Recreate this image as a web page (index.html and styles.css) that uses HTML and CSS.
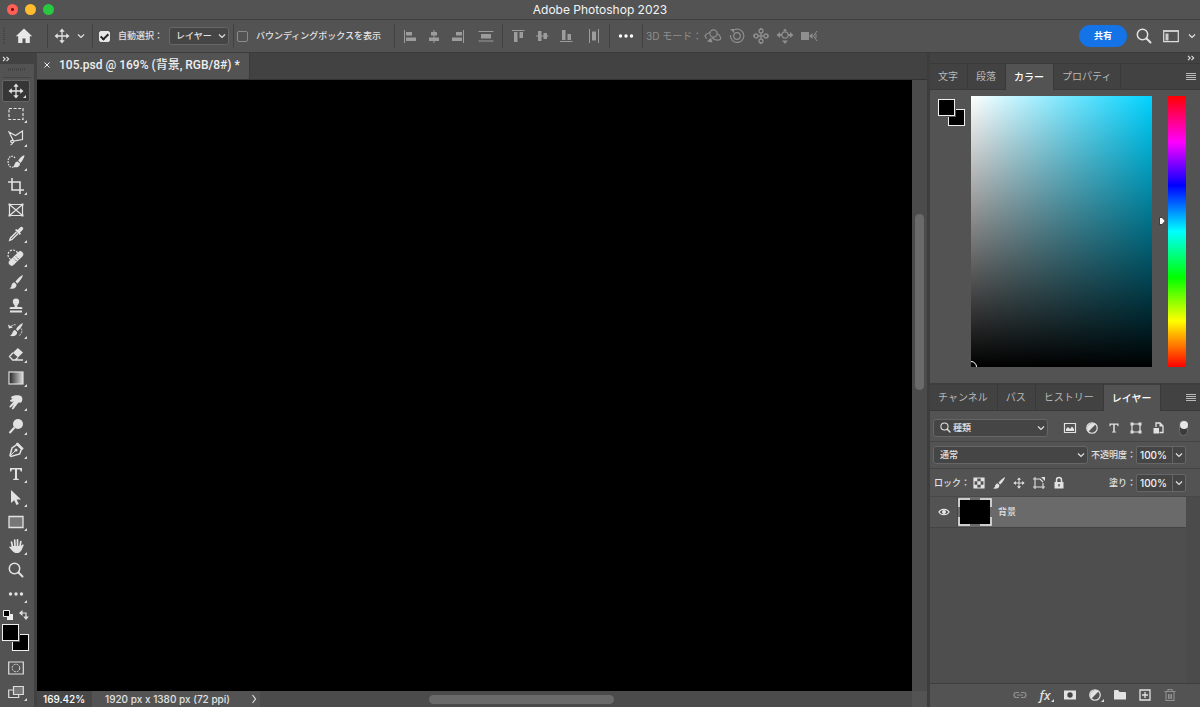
FILE: index.html
```html
<!DOCTYPE html>
<html lang="ja">
<head>
<meta charset="utf-8">
<title>Adobe Photoshop 2023</title>
<link rel="stylesheet" href="styles.css">
</head>
<body>
<svg class="defs" aria-hidden="true">
  <symbol id="move" viewBox="0 0 16 16"><path d="M8 2v12M2 8h12" stroke="currentColor" stroke-width="1.3"/><path d="M8 .5 10.7 3.8H5.300zM8 15.500 10.700 12.200H5.300zM.5 8 3.800 5.300v5.400zM15.500 8 12.200 5.300v5.400z" fill="currentColor"/></symbol>
  <symbol id="chev" viewBox="0 0 8 8"><path d="M1 2.500 4 5.500 7 2.500" fill="none" stroke="currentColor" stroke-width="1.200"/></symbol>
  <symbol id="more" viewBox="0 0 16 16"><circle cx="2.500" cy="8" r="1.700" fill="currentColor"/><circle cx="8" cy="8" r="1.700" fill="currentColor"/><circle cx="13.500" cy="8" r="1.700" fill="currentColor"/></symbol>
  <symbol id="lens" viewBox="0 0 16 16"><circle cx="6.500" cy="6.500" r="5.200" fill="none" stroke="currentColor" stroke-width="1.500"/><path d="m10.500 10.500 4 4" stroke="currentColor" stroke-width="2" stroke-linecap="round"/></symbol>
  <symbol id="brush" viewBox="0 0 16 16"><path d="M15 1c-2.500 1-6 4.200-7.600 6.700l1.900 1.900C11.700 7.600 14.400 3.700 15 1zM6.600 8.500c-2.600 0-3 2.400-3.300 3.900-.4 1-1.300 1.500-2.300 1.700 3 1.200 7.500.7 7.500-3.700z" fill="currentColor"/></symbol>
  <symbol id="type" viewBox="0 0 16 16"><path d="M2 2h12v3.500h-1.200L12 3.500H9v9l1.800.5v1H5.200v-1l1.800-.5v-9H4l-.8 2H2z" fill="currentColor"/></symbol>
  <symbol id="half" viewBox="0 0 16 16"><circle cx="8" cy="8" r="6" fill="none" stroke="currentColor" stroke-width="1.400"/><path d="M3.800 12.200A6 6 0 0 1 12.200 3.800z" fill="currentColor"/></symbol>
  <symbol id="menu" viewBox="0 0 10 8"><path d="M0 .5h10M0 2.500h10M0 4.500h10M0 6.500h10" stroke="currentColor"/></symbol>
  <symbol id="dbl" viewBox="0 0 8 6"><path d="m1 .8 2.200 2.200L1 5.200M4.500.8 6.700 3 4.500 5.200" fill="none" stroke="currentColor" stroke-width="1.100"/></symbol>
</svg>
<div class="app">
  <header class="titlebar">
    <div class="lights"><button class="light red" aria-label="閉じる"></button><button class="light yellow" aria-label="しまう"></button><button class="light green" aria-label="拡大"></button></div>
    <h1>Adobe Photoshop 2023</h1>
  </header>

  <div class="options">
    <div class="seg seg-home"><span class="grip"></span><button aria-label="ホーム"><svg class="i18" viewBox="0 0 18 18"><path d="M9 1.500.8 9.200h2.400V16h4.300v-4.600h3V16h4.300V9.200h2.400z" fill="#e8e8e8"/></svg></button></div>
    <div class="seg seg-move"><button aria-label="移動ツール"><svg class="i16"><use href="#move"/></svg></button><button aria-label="プリセット"><svg class="i8"><use href="#chev"/></svg></button></div>
    <div class="seg seg-auto"><input type="checkbox" id="auto" checked><label for="auto">自動選択：</label><span class="select"><select aria-label="自動選択"><option>レイヤー</option></select><svg class="i8"><use href="#chev"/></svg></span></div>
    <div class="seg seg-box"><input type="checkbox" id="bbox"><label for="bbox">バウンディングボックスを表示</label></div>
    <div class="seg seg-align">
      <button aria-label="左端揃え"><svg class="i16" viewBox="0 0 16 16"><path d="M2 2h1v13H2zM4 4h6v3.500H4zM4 9.500h10V13H4z"/></svg></button>
      <button aria-label="水平方向中央揃え"><svg class="i16" viewBox="0 0 16 16"><path d="M7.500 2h1v13h-1zM5 4h6v3.500H5zM3 9.500h10V13H3z"/></svg></button>
      <button aria-label="右端揃え"><svg class="i16" viewBox="0 0 16 16"><path d="M13 2h1v13h-1zM6 4h6v3.500H6zM2 9.500h10V13H2z"/></svg></button>
      <button class="wide" aria-label="垂直分布"><svg class="i16" viewBox="0 0 16 16"><path d="M.5 3h15v1H.5zM3 6h10v4.500H3zM.5 12.500h15v1H.5z"/></svg></button>
    </div>
    <div class="seg seg-align2">
      <button aria-label="上端揃え"><svg class="i16" viewBox="0 0 16 16"><path d="M2 2h12.500v1H2zM4 4h3.500v10H4zM9.500 4H13v6H9.500z"/></svg></button>
      <button aria-label="垂直方向中央揃え"><svg class="i16" viewBox="0 0 16 16"><path d="M2 7.500h12.500v1H2zM4 3h3.500v10H4zM9.500 5H13v6H9.500z"/></svg></button>
      <button aria-label="下端揃え"><svg class="i16" viewBox="0 0 16 16"><path d="M2 13h12.500v1H2zM4 2h3.500v10H4zM9.500 6H13v6H9.500z"/></svg></button>
      <button class="wide" aria-label="水平分布"><svg class="i16" viewBox="0 0 16 16"><path d="M3 1h1v14H3zM6 3.500h4v9H6zM12 1h1v14h-1z"/></svg></button>
    </div>
    <div class="seg seg-more"><button aria-label="整列と分布"><svg class="i16"><use href="#more"/></svg></button></div>
    <div class="seg seg-3d"><span>3D モード：</span>
      <button aria-label="3D 回転"><svg class="i18" viewBox="0 0 18 18"><g fill="none" stroke="currentColor" stroke-width="1.200"><circle cx="9.500" cy="6.500" r="3.600"/><path d="M6 5.500C1.500 6.500-.5 9.500 3 11.500M13 6.500c4 2.500 5 5.500 2 6.500-2 .6-5-.5-7-2"/></g><path d="m3 14.500 5.500 1-1.500-5z" fill="currentColor"/></svg></button>
      <button aria-label="3D ロール"><svg class="i18" viewBox="0 0 18 18"><g fill="none" stroke="currentColor" stroke-width="1.200"><circle cx="9" cy="9" r="3.300"/><path d="M5 3.500A6.700 6.700 0 1 1 2.500 8"/></g><path d="M2 2h4v4z" fill="currentColor"/></svg></button>
      <button aria-label="3D パン"><svg class="i18" viewBox="0 0 18 18"><g fill="none" stroke="currentColor" stroke-width="1.300"><circle cx="9" cy="4" r="2"/><circle cx="9" cy="14" r="2"/><circle cx="4" cy="9" r="2"/><circle cx="14" cy="9" r="2"/><path d="M9 6v6M6 9h6"/></g><path d="M9 .8 11 3H7zM9 17.200 11 15H7zM.8 9 3 7v4zM17.200 9 15 7v4z" fill="currentColor"/></svg></button>
      <button aria-label="3D スライド"><svg class="i18" viewBox="0 0 18 18"><circle cx="9" cy="8" r="3.200" fill="none" stroke="currentColor" stroke-width="1.200"/><path d="M9 17l3-3.500H6zM.5 8 4 5v2h2v2H4v2zM17.500 8 14 5v2h-2v2h2v2zM9 1.500l2 2.500H7z" fill="currentColor"/></svg></button>
      <button aria-label="3D カメラ"><svg class="i18" viewBox="0 0 18 18"><path d="M1 5h8v8H1zM9 9l3.500-3v6z" fill="currentColor"/><path d="m17 4-3.500 5 3.500 5M16 7v4" fill="none" stroke="currentColor"/></svg></button>
    </div>
    <div class="right-tools">
      <button class="share">共有</button>
      <button aria-label="検索"><svg class="i16"><use href="#lens"/></svg></button>
      <button aria-label="ワークスペース"><svg class="i16" viewBox="0 0 16 16"><path d="M.7 2.700h14.600v11H.7z" fill="none" stroke="#ddd" stroke-width="1.200"/><path d="M1 2h14v2H1zM2.500 5.500h3v7h-3z" fill="#ccc"/></svg></button>
      <button aria-label="ワークスペースの選択"><svg class="i8"><use href="#chev"/></svg></button>
    </div>
  </div>

  <div class="work">
    <nav class="tools" aria-label="ツール">
      <button class="collapse" aria-label="展開"><svg class="dbl"><use href="#dbl"/></svg></button>
      <div class="handle"></div>
      <div class="toollist">
        <button class="tool fly active" aria-label="移動"><svg class="i16"><use href="#move"/></svg></button>
        <button class="tool fly" aria-label="長方形選択"><svg class="i16" viewBox="0 0 16 16"><rect x="1" y="2.500" width="14" height="11" fill="none" stroke="currentColor" stroke-width="1.200" stroke-dasharray="3 1.600"/></svg></button>
        <button class="tool fly" aria-label="多角形選択"><svg class="i16" viewBox="0 0 16 16"><path d="M1 2l6.500 3.500L14.500 1v8.500L5.500 11zM5.500 11c-2-1.500-4 .5-2 1.500 1.500.7 3-.5 2-1.500zM5 12c-.2 1.500-1 2.500-2.500 3" fill="none" stroke="currentColor" stroke-width="1.200"/></svg></button>
        <button class="tool fly" aria-label="クイック選択"><svg class="i18" viewBox="0 0 18 18"><path d="M8 5C7 3 4 2.500 2.300 4.500S.8 11 2.500 13s4.500 1.500 5.500-.5" fill="none" stroke="currentColor" stroke-width="1.200" stroke-dasharray="1.600 1"/><path d="M17.500 2c-3 1-5.500 4-6.300 5.700l2.200 2.200C15.500 8 17.200 5 17.500 2zM10.500 8.500c-3 .3-2.300 3.500-4.500 5.500 3.500 1 7 0 7-3.500z" fill="currentColor"/></svg></button>
        <button class="tool fly" aria-label="切り抜き"><svg class="i16" viewBox="0 0 16 16"><path d="M4 0v12h12M0 4h12v12" fill="none" stroke="currentColor" stroke-width="1.600"/></svg></button>
        <button class="tool" aria-label="フレーム"><svg class="i16" viewBox="0 0 16 16"><path d="M1.500 2.500h13v11h-13zM1.500 2.500l13 11M14.500 2.500l-13 11" fill="none" stroke="currentColor" stroke-width="1.200"/><path d="M.5 1.500h2v2h-2zM13.500 1.500h2v2h-2zM.5 12.500h2v2h-2zM13.500 12.500h2v2h-2z" fill="currentColor"/></svg></button>
        <button class="tool fly" aria-label="スポイト"><svg class="i16" viewBox="0 0 16 16"><path d="M8.500 6 2.500 12l-.8 2.300L4 13.500l6-6" fill="none" stroke="currentColor" stroke-width="1.400"/><path d="m7 4 1.300-1 1.200 1L12 1.500c1-1 2-.8 2.700-.2.700.8.800 1.800-.2 2.700L12 6.500l1 1.200L11.800 9z" fill="currentColor"/></svg></button>
        <button class="tool fly" aria-label="スポット修復"><svg class="i18" viewBox="0 0 18 18"><circle cx="6" cy="6" r="5" fill="none" stroke="currentColor" stroke-width="1.200" stroke-dasharray="2 1.300"/><rect x="0" y="6.500" width="18" height="6" rx="3" transform="rotate(-45 9 9.500)" fill="currentColor"/><path d="m7 9.500 3.500 3.500M9 7.500l3.500 3.500" stroke="#535353" stroke-width="1" stroke-dasharray="1.200 1"/></svg></button>
        <button class="tool fly" aria-label="ブラシ"><svg class="i16"><use href="#brush"/></svg></button>
        <button class="tool fly" aria-label="スタンプ"><svg class="i16" viewBox="0 0 16 16"><path d="M6.700 7.500C5.500 6 4.800 5 4.800 3.800a3.200 3.200 0 0 1 6.400 0C11.200 5 10.500 6 9.300 7.500L9.500 9H13c1 0 1.500.8 1.500 2h-13c0-1.200.5-2 1.500-2h3.500zM2 12.500h12v2H2z" fill="currentColor"/></svg></button>
        <button class="tool fly" aria-label="ヒストリーブラシ"><svg class="i16" viewBox="0 0 16 16"><path d="M15 1c-2.500 1-6 4.200-7 6.200l1.700 1.700C12 7 14.500 3.500 15 1zM7 8c-2.500.3-2 4-5 5.800 4 1.200 7.500-.5 7-3.800zM0 2.500 5 5.500 1 6.500z" fill="currentColor"/><path d="M3 4.500C5 2.500 7 2.500 8.500 3M13 6.500c2 2.500.5 6-2.500 7.500" fill="none" stroke="currentColor" stroke-dasharray="2 1"/></svg></button>
        <button class="tool fly" aria-label="消しゴム"><svg class="i16" viewBox="0 0 16 16"><path d="M9.800 2 15 6.500 10 11.500 5 6.700z" fill="currentColor"/><path d="M5 6.700 1.500 10.500 4.700 14H7l3-2.500M5 14h10" fill="none" stroke="currentColor" stroke-width="1.300"/></svg></button>
        <button class="tool fly" aria-label="グラデーション"><svg class="i16" viewBox="0 0 16 16"><defs><linearGradient id="gr"><stop stop-color="#222"/><stop offset="1" stop-color="#ddd"/></linearGradient></defs><rect x="1" y="2" width="14" height="12" fill="url(#gr)" stroke="#ddd" stroke-width="1.200"/></svg></button>
        <button class="tool fly" aria-label="指先"><svg class="i16" viewBox="0 0 16 16"><path d="M3 3c2-2 8-2.500 10-1 2 1.500 1.500 5 .5 6-.8 1-2 .6-3 .5L5.500 15c-1 .8-2 0-1.500-1l2-3.800-3 3c-1.200.8-2-.3-1.300-1.300L6 7c-2.500 2-5 0-3.500-1L5 4.500C4 5 3 4 3 3z" fill="currentColor"/></svg></button>
        <button class="tool fly" aria-label="覆い焼き"><svg class="i16" viewBox="0 0 16 16"><circle cx="10" cy="6" r="5" fill="currentColor"/><path d="M6.500 9.500 1.500 15" stroke="currentColor" stroke-width="2"/></svg></button>
        <button class="tool fly" aria-label="ペン"><svg class="i16" viewBox="0 0 16 16"><path d="m9 2.500 4.500 4.500-1.800 5L3 14.500l-1-1L4 6z" fill="none" stroke="currentColor" stroke-width="1.500"/><path d="m9.500.8 5.700 5.700-1.300 1.200L8.300 2zM2 14l5-5" stroke="currentColor" fill="currentColor"/><circle cx="8" cy="8" r="1.500" fill="currentColor"/></svg></button>
        <button class="tool fly" aria-label="文字"><svg class="i16"><use href="#type"/></svg></button>
        <button class="tool fly" aria-label="パス選択"><svg class="i16" viewBox="0 0 16 16"><path d="M3 0v13l3.200-2.700L8.500 15l2.300-1-2.200-4.500H13z" fill="currentColor"/></svg></button>
        <button class="tool fly" aria-label="長方形"><svg class="i16" viewBox="0 0 16 16"><path d="M1 2.500h14v11H1z" fill="#777" stroke="currentColor" stroke-width="1.300"/></svg></button>
        <button class="tool fly" aria-label="手のひら"><svg class="i16" viewBox="0 0 16 16"><path d="M4.700 9.500 3.500 4M7 8 6.700 2M9.500 8V1.800M12 8.500 12.800 3.500" stroke="currentColor" stroke-width="1.700" stroke-linecap="round"/><path d="M4 8h8.800l1.700-1.500c1-.3 1.500.3 1 1.200C13.500 12 13 15 9 15c-3.500 0-4.500-2-6.500-4.300C0 8.500 1.500 8 3 9z" fill="currentColor"/></svg></button>
        <button class="tool" aria-label="ズーム"><svg class="i16"><use href="#lens"/></svg></button>
        <button class="tool fly" aria-label="その他"><svg class="i16"><use href="#more"/></svg></button>
      </div>
      <div class="mini">
        <button aria-label="初期設定の色"><svg class="i10" viewBox="0 0 10 10"><path d="M4 4h6v6H4z" fill="#eee"/><path d="M.5.5h6v6h-6z" fill="#000" stroke="#eee"/></svg></button>
        <button aria-label="色の切り替え"><svg class="i10" viewBox="0 0 10 10"><path d="M2 3h5v5" fill="none" stroke="currentColor" stroke-width="1.200"/><path d="M3.500 0v6L0 3zM4.200 6.500h5.600L7 10z" fill="currentColor"/></svg></button>
      </div>
      <button class="swatches" aria-label="描画色と背景色"><span class="sw back"></span><span class="sw front"></span></button>
      <button class="tool mask" aria-label="クイックマスク"><svg class="i16" viewBox="0 0 16 16"><path d="M.7 2h14.600v12H.7z" fill="none" stroke="#ddd" stroke-width="1.200"/><circle cx="8" cy="8" r="3.800" fill="none" stroke="#ddd" stroke-dasharray="2 1"/></svg></button>
      <button class="tool fly" aria-label="スクリーンモード"><svg class="i16" viewBox="0 0 16 16"><path d="M5 6H.7v7.500h10V11" fill="none" stroke="#ddd" stroke-width="1.200"/><path d="M5.500 2.500h9.800v8H5.500z" fill="#777" stroke="#ddd" stroke-width="1.200"/></svg></button>
    </nav>

    <main class="document">
      <div class="doctabs"><div class="doctab"><button aria-label="閉じる"><svg class="i8" viewBox="0 0 8 8"><path d="m1.500 1.500 5 5m0-5-5 5" stroke="currentColor"/></svg></button><span>105.psd @ 169% (背景, RGB/8#) *</span></div></div>
      <div class="canvasrow"><div class="canvas"></div><div class="vscroll"><div class="vthumb"></div></div></div>
      <footer class="status"><input class="zoom" aria-label="ズーム率" value="169.42%"><div class="info"><span>1920 px x 1380 px (72 ppi)</span><button aria-label="情報"><svg class="i10" viewBox="0 0 10 10"><path d="m3.500 1 3 4-3 4" fill="none" stroke="currentColor" stroke-width="1.200"/></svg></button></div><div class="hscroll"><div class="hthumb"></div></div><div class="corner"></div></footer>
    </main>

    <aside class="panels">
      <div class="panelhead"><button aria-label="折りたたむ"><svg class="dbl"><use href="#dbl"/></svg></button></div>
      <section class="color">
        <div class="tabs"><button>文字</button><button>段落</button><button class="on">カラー</button><button>プロパティ</button><button class="burger" aria-label="パネルメニュー"><svg class="menuic"><use href="#menu"/></svg></button></div>
        <div class="picker"><button class="swatches" aria-label="描画色と背景色"><span class="sw back"></span><span class="sw front"></span></button>
          <div class="field"><span class="ring"></span></div>
          <div class="hue"><svg class="pointer" viewBox="0 0 8 10"><path d="M1.500 1.500H4L7.300 5 4 8.500H1.500z" fill="#fff" stroke="#222" stroke-width=".8"/></svg></div></div>
      </section>
      <section class="layers">
        <div class="tabs"><button>チャンネル</button><button>パス</button><button>ヒストリー</button><button class="on">レイヤー</button><button class="burger" aria-label="パネルメニュー"><svg class="menuic"><use href="#menu"/></svg></button></div>
        <div class="row filter">
          <span class="select kind"><svg class="lens"><use href="#lens"/></svg><select aria-label="種類"><option>種類</option></select><svg class="i8"><use href="#chev"/></svg></span>
          <div class="kinds">
            <button aria-label="ピクセル"><svg class="i14" viewBox="0 0 14 14"><path d="M1.500 2.500h11v9h-11z" fill="none" stroke="currentColor" stroke-width="1.200"/><path d="M3 10V8l2-2 2 2 2-2.500L11 8v2z" fill="currentColor"/></svg></button>
            <button aria-label="調整"><svg class="i14"><use href="#half"/></svg></button>
            <button aria-label="テキスト"><svg class="i12"><use href="#type"/></svg></button>
            <button aria-label="シェイプ"><svg class="i14" viewBox="0 0 14 14"><path d="M3 3h8v8H3z" fill="none" stroke="currentColor" stroke-width="1.200"/><path d="M1.500 1.500h3v3h-3zM9.500 1.500h3v3h-3zM1.500 9.500h3v3h-3zM9.500 9.500h3v3h-3z" fill="#ddd"/></svg></button>
            <button aria-label="スマートオブジェクト"><svg class="i14" viewBox="0 0 14 14"><path d="M5 6V2h4l3 3v6.500H8.500" fill="none" stroke="currentColor" stroke-width="1.300"/><path d="M2.500 7H8v5.500H2.500zM8.500 1.500v4H12z" fill="currentColor"/></svg></button>
          </div>
          <button class="toggle" aria-label="フィルター切り替え"></button>
        </div>
        <div class="row blend"><span class="select mode"><select aria-label="描画モード"><option>通常</option></select><svg class="i8"><use href="#chev"/></svg></span><label for="op">不透明度：</label><span class="num"><input id="op" value="100%"><button aria-label="不透明度の調整"><svg class="i8"><use href="#chev"/></svg></button></span></div>
        <div class="row lock"><span class="locklabel">ロック：</span>
          <div class="locks">
            <button aria-label="透明ピクセル"><svg class="i12" viewBox="0 0 12 12"><path d="M1 1h10v10H1z" fill="none" stroke="currentColor" stroke-width="1.200"/><path d="M1 1h3.300v3.300H1zM7.700 1H11v3.300H7.700zM4.300 4.300h3.400v3.400H4.300zM1 7.700h3.300V11H1zM7.700 7.700H11V11H7.700z" fill="currentColor"/></svg></button>
            <button aria-label="画像ピクセル"><svg class="i14"><use href="#brush"/></svg></button>
            <button aria-label="位置"><svg class="i12"><use href="#move"/></svg></button>
            <button aria-label="アートボード"><svg class="i14" viewBox="0 0 14 14"><path d="M3 1v12M11 7v6M1 3h7M1 11h12M8 3l3 3" fill="none" stroke="currentColor" stroke-width="1.100"/><path d="M9 1h4v4z" fill="currentColor"/></svg></button>
            <button aria-label="すべて"><svg class="i14" viewBox="0 0 14 14"><path d="M4.500 6V4a2.500 2.500 0 0 1 5 0v2" fill="none" stroke="currentColor" stroke-width="1.500"/><path d="M2.500 6h9v6.500h-9z" fill="currentColor"/><path d="M6.300 8h1.400v2.500H6.300z" fill="#535353"/></svg></button>
          </div>
          <label for="fill">塗り：</label><span class="num"><input id="fill" value="100%"><button aria-label="塗りの調整"><svg class="i8"><use href="#chev"/></svg></button></span></div>
        <div class="layerarea"><div class="list">
          <div class="layer"><button class="eye" aria-label="表示"><svg class="i12" viewBox="0 0 14 14"><path d="M1 7c2.800-4.300 9.200-4.300 12 0-2.800 4.300-9.200 4.300-12 0z" fill="none" stroke="#eee" stroke-width="1.300"/><circle cx="7" cy="7" r="2.200" fill="#eee"/></svg></button><div class="layerbody"><svg class="thumb" viewBox="0 0 34 28"><path d="M2 2h30v24H2z" fill="#000"/><path d="M1 9V1h11M22 1h11v8M33 19v8H22M12 27H1v-8" fill="none" stroke="#eee" stroke-width="1.500"/></svg><span>背景</span></div></div>
        </div><div class="track"></div></div>
        <footer class="actions">
          <button class="dim" aria-label="リンク"><svg class="i14" viewBox="0 0 14 14"><path d="M6 4.500H3.500a2.500 2.500 0 0 0 0 5H6M8 4.500h2.500a2.500 2.500 0 0 1 0 5H8M4 7h6" fill="none" stroke="currentColor" stroke-width="1.200"/></svg></button>
          <button class="fx fly" aria-label="レイヤースタイル">fx</button>
          <button aria-label="マスク"><svg class="i14" viewBox="0 0 14 14"><path d="M1 2.500h12v9H1z" fill="currentColor"/><circle cx="7" cy="7" r="2.700" fill="#444"/></svg></button>
          <button class="fly" aria-label="塗りつぶし"><svg class="i14"><use href="#half"/></svg></button>
          <button aria-label="グループ"><svg class="i14" viewBox="0 0 14 14"><path d="M1 3q0-1 1-1h3l1.500 2H12q1 0 1 1v6.500H1z" fill="currentColor"/></svg></button>
          <button aria-label="新規レイヤー"><svg class="i14" viewBox="0 0 14 14"><path d="M2 2h10v10H2zM7 4v6M4 7h6" fill="none" stroke="currentColor" stroke-width="1.300"/></svg></button>
          <button class="dim" aria-label="削除"><svg class="i14" viewBox="0 0 14 14"><path d="M1.500 3.500h11M5 3V1.500h4V3M3 4v8.500h8V4M5.500 6v5M8.500 6v5M7 6v5" fill="none" stroke="currentColor" stroke-width="1.100"/></svg></button>
        </footer>
      </section>
    </aside>
  </div>
</div>
</body>
</html>
```
FILE: styles.css
```css
* { box-sizing: border-box; }
body { margin: 0; background: #424242; color: #e2e2e2; font: 500 9px/16px Inter, "Noto Sans CJK JP", sans-serif; }
button { display: flex; align-items: center; justify-content: center; padding: 0; border: 0; background: none; color: inherit; font: inherit; }
svg { display: block; flex: none; }
.defs { position: absolute; width: 0; height: 0; }
.i8 { width: 8px; height: 8px; }
.i10 { width: 10px; height: 10px; }
.i12 { width: 12px; height: 12px; }
.i14 { width: 14px; height: 14px; }
.i16 { width: 16px; height: 16px; }
.i18 { width: 18px; height: 18px; }
.app { display: flex; flex-direction: column; height: 100vh; overflow: hidden; }

.titlebar { display: grid; grid-template-columns: 1fr auto 1fr; align-items: center; height: 20px; background: #535353; border-bottom: 1px solid #3e3e3e; }
.titlebar h1 { margin: 0; font-size: 12px; font-weight: 400; line-height: 18px; color: #f4f4f4; }
.lights { display: flex; gap: 7px; padding-left: 7px; }
.light { width: 11px; height: 11px; border-radius: 50%; }
.red { background: radial-gradient(circle, #7a0c08 0 1px, #ff5f57 2px); }
.yellow { background: #febc2e; }
.green { background: #28c840; }

.options { display: flex; height: 33px; background: #535353; border-bottom: 1px solid #3b3b3b; }
.seg { display: flex; align-items: center; position: relative; flex: none; }
.seg:not(.seg-3d)::after { content: ""; position: absolute; right: 0; top: 4px; bottom: 4px; width: 1px; background: #414141; }
.grip { width: 2px; height: 18px; background: repeating-linear-gradient(#444 0 1px, #535353 1px 2px); }
.seg-home { width: 48px; padding-left: 3px; gap: 10px; }
.seg-move { width: 45px; padding-left: 6px; gap: 7px; }
.seg-auto { width: 141px; padding-left: 6px; }
.seg-auto label { margin-left: 8px; width: 51px; }
.seg-auto .select { width: 60px; height: 18px; }
.seg-box { width: 161px; padding-left: 3px; gap: 8px; }
.seg-align, .seg-align2 { color: #9c9c9c; fill: #9c9c9c; padding-left: 3px; }
.seg-align { width: 108px; }
.seg-align2 { width: 107px; }
.seg-align button, .seg-align2 button { width: 24px; height: 24px; }
.seg-align .wide, .seg-align2 .wide { width: 32px; }
.seg-more { width: 33px; padding-left: 8px; color: #fff; }
.seg-3d { padding-left: 3px; color: #8f8f8f; }
.seg-3d span { width: 55px; white-space: nowrap; font-size: 10px; font-weight: 400; }
.seg-3d button { width: 24px; }
.right-tools { display: flex; align-items: center; margin-left: auto; padding-right: 4px; gap: 9px; }
.right-tools .share { width: 48px; height: 22px; border-radius: 11px; background: #1473e6; color: #fff; font-weight: 700; }
.right-tools button:nth-child(3) { margin-left: 2px; }
input[type="checkbox"] { appearance: none; width: 11px; height: 11px; margin: 0; border: 1px solid #8b8b8b; border-radius: 2px; flex: none; }
input[type="checkbox"]:checked { background: #e6e6e6; border-color: #e6e6e6; display: grid; place-items: center; }
input[type="checkbox"]:checked::before { content: ""; width: 3px; height: 6px; border: solid #222; border-width: 0 2px 2px 0; transform: rotate(45deg); }
label { white-space: nowrap; }
.select { display: flex; align-items: center; background: #454545; border: 1px solid #666; border-radius: 3px; padding: 0 2px 0 6px; }
.select select { appearance: none; flex: 1; min-width: 0; border: 0; padding: 0; background: none; color: inherit; font: inherit; }

.work { display: flex; flex: 1; min-height: 0; }
.tools { display: flex; flex-direction: column; flex: none; width: 37px; background: #535353; border-right: 3px solid #424242; }
.collapse { justify-content: flex-start; height: 11px; padding-left: 2px; background: #424242; flex: none; }
.dbl { width: 8px; height: 6px; }
.handle { height: 14px; margin: 0 3px; flex: none; border-bottom: 1px solid #444; background: repeating-linear-gradient(90deg, #444 0 1px, #535353 1px 2px) center 4px / 18px 3px no-repeat; }
.tool { position: relative; width: 28px; height: 24px; margin-left: 2px; flex: none; }
.tool.active { background: #363636; border: 1px solid #656565; border-radius: 2px; height: 22px; margin-top: 2px; }
.fly { position: relative; }
.fly::after { content: ""; position: absolute; right: 3px; bottom: 3px; border: solid transparent; border-width: 0 0 3px 3px; border-bottom-color: #ddd; }
.mini { display: flex; gap: 6px; padding: 3px; height: 18px; }
.swatches { position: relative; flex: none; width: 27px; height: 27px; }
.tools .swatches { margin-left: 2px; }
.sw { position: absolute; width: 17px; height: 17px; background: #000; border: 1px solid #eee; outline: 1px solid #555; }
.front { left: 0; top: 0; }
.back { right: 0; bottom: 0; }
.mask { margin-top: 5px; }

.document { display: flex; flex-direction: column; flex: 1; min-width: 0; }
.doctabs { display: flex; height: 27px; flex: none; background: #424242; border-bottom: 1px solid #333; }
.doctab { display: flex; align-items: center; gap: 8px; padding: 0 9px 3px 6px; background: #535353; border-right: 1px solid #3a3a3a; font: 500 12px/20px Roboto, "Noto Sans CJK JP", sans-serif; color: #eee; white-space: nowrap; }
.canvasrow { display: flex; flex: 1; min-height: 0; }
.canvas { flex: 1; background: #000; }
.vscroll { width: 15px; padding: 134px 3px 0; background: #4b4b4b; }
.vthumb { height: 176px; border-radius: 5px; background: #6a6a6a; }
.status { display: flex; height: 16px; flex: none; background: #4b4b4b; font-size: 10px; }
.zoom { width: 55px; border: 0; padding: 0 0 0 6px; background: #474747; color: #fff; font: 500 10px/16px Inter, sans-serif; }
.info { display: flex; align-items: center; justify-content: space-between; width: 168px; padding: 0 1px 0 13px; background: #535353; white-space: nowrap; }
.hscroll { flex: 1; padding: 4px 0 0 169px; }
.hthumb { width: 185px; height: 9px; border-radius: 5px; background: #6a6a6a; }
.corner { width: 15px; background: #535353; }

.panels { display: flex; flex-direction: column; flex: none; width: 273px; border-left: 3px solid #3d3d3d; background: #535353; }
.panelhead { display: flex; justify-content: flex-end; height: 11px; padding-right: 5px; background: #424242; border-bottom: 1px solid #3a3a3a; }
.tabs { display: flex; height: 26px; background: #424242; border-bottom: 1px solid #393939; font-size: 10px; font-weight: 400; color: #b9b9b9; }
.tabs button { padding: 0 9px 1px 8px; border-right: 1px solid #393939; white-space: nowrap; }
.tabs button.on { height: 26px; background: #535353; color: #fff; font-weight: 500; }
.tabs .burger { margin-left: auto; padding: 0 4px 0 0; border: 0; }
.menuic { width: 10px; height: 8px; }
.picker { display: flex; padding: 6px 14px 16px 8px; }
.picker .swatches { margin: 3px 6px 0 0; }
.field { position: relative; flex: 1; height: 271px; overflow: hidden; background: linear-gradient(transparent, #000), linear-gradient(90deg, #fff, #00d2ff); }
.ring { position: absolute; left: -6px; bottom: -6px; width: 12px; height: 12px; border: 1px solid #fff; border-radius: 50%; }
.hue { position: relative; width: 18px; margin-left: 16px; background: linear-gradient(#f00, #f0f 17%, #00f 33%, #0ff 50%, #0f0 67%, #ff0 83%, #f00); }
.pointer { position: absolute; left: -10px; top: 120px; width: 8px; height: 10px; }
.layers { display: flex; flex-direction: column; flex: 1; min-height: 0; border-top: 2px solid #3d3d3d; }
.row { display: flex; align-items: center; height: 27px; padding: 0 14px 0 3px; border-bottom: 1px solid #444; flex: none; }
.filter { height: 31px; padding-top: 3px; }
.kind { width: 115px; height: 18px; gap: 2px; }
.lens { width: 11px; height: 11px; }
.kinds { display: flex; margin-left: 11px; }
.kinds button { width: 22px; height: 18px; }
.toggle { align-items: flex-start; width: 9px; height: 16px; margin: 0 -2px 0 auto; border-radius: 5px; background: #3b3b3b; border: 1px solid #6a6a6a; }
.toggle::before { content: ""; flex: none; width: 8px; height: 8px; border-radius: 50%; background: #e6e6e6; }
.mode { width: 155px; height: 18px; }
.row label { margin-left: auto; }
.num { display: flex; width: 50px; height: 18px; background: #454545; border: 1px solid #666; border-radius: 2px; }
.num input { width: 36px; border: 0; border-right: 1px solid #666; padding: 0 0 0 3px; background: none; color: #f2f2f2; font: 500 10px/16px Inter, sans-serif; }
.num button { flex: 1; }
.lock { border: 0; }
.locklabel { width: 36px; padding-left: 1px; white-space: nowrap; }
.locks { display: flex; }
.locks button { width: 20px; height: 18px; }
.layerarea { display: flex; flex: 1; min-height: 0; border-top: 1px solid #484848; }
.list { flex: 1; background: #4e4e4e; }
.layer { display: flex; height: 31px; border-bottom: 1px solid #444; background: #535353; }
.eye { width: 28px; border-right: 1px solid #484848; }
.layerbody { display: flex; flex: 1; align-items: center; gap: 6px; background: #6a6a6a; }
.thumb { width: 34px; height: 28px; }
.track { width: 14px; background: #4b4b4b; }
.actions { display: flex; align-items: center; justify-content: flex-end; height: 24px; gap: 1px; padding: 0 18px 1px 0; border-top: 1px solid #3e3e3e; flex: none; }
.actions button { width: 24px; height: 20px; }
.dim { color: #929292; }
.actions .fx { font: italic 500 13px/18px "Noto Sans", sans-serif; }
```
